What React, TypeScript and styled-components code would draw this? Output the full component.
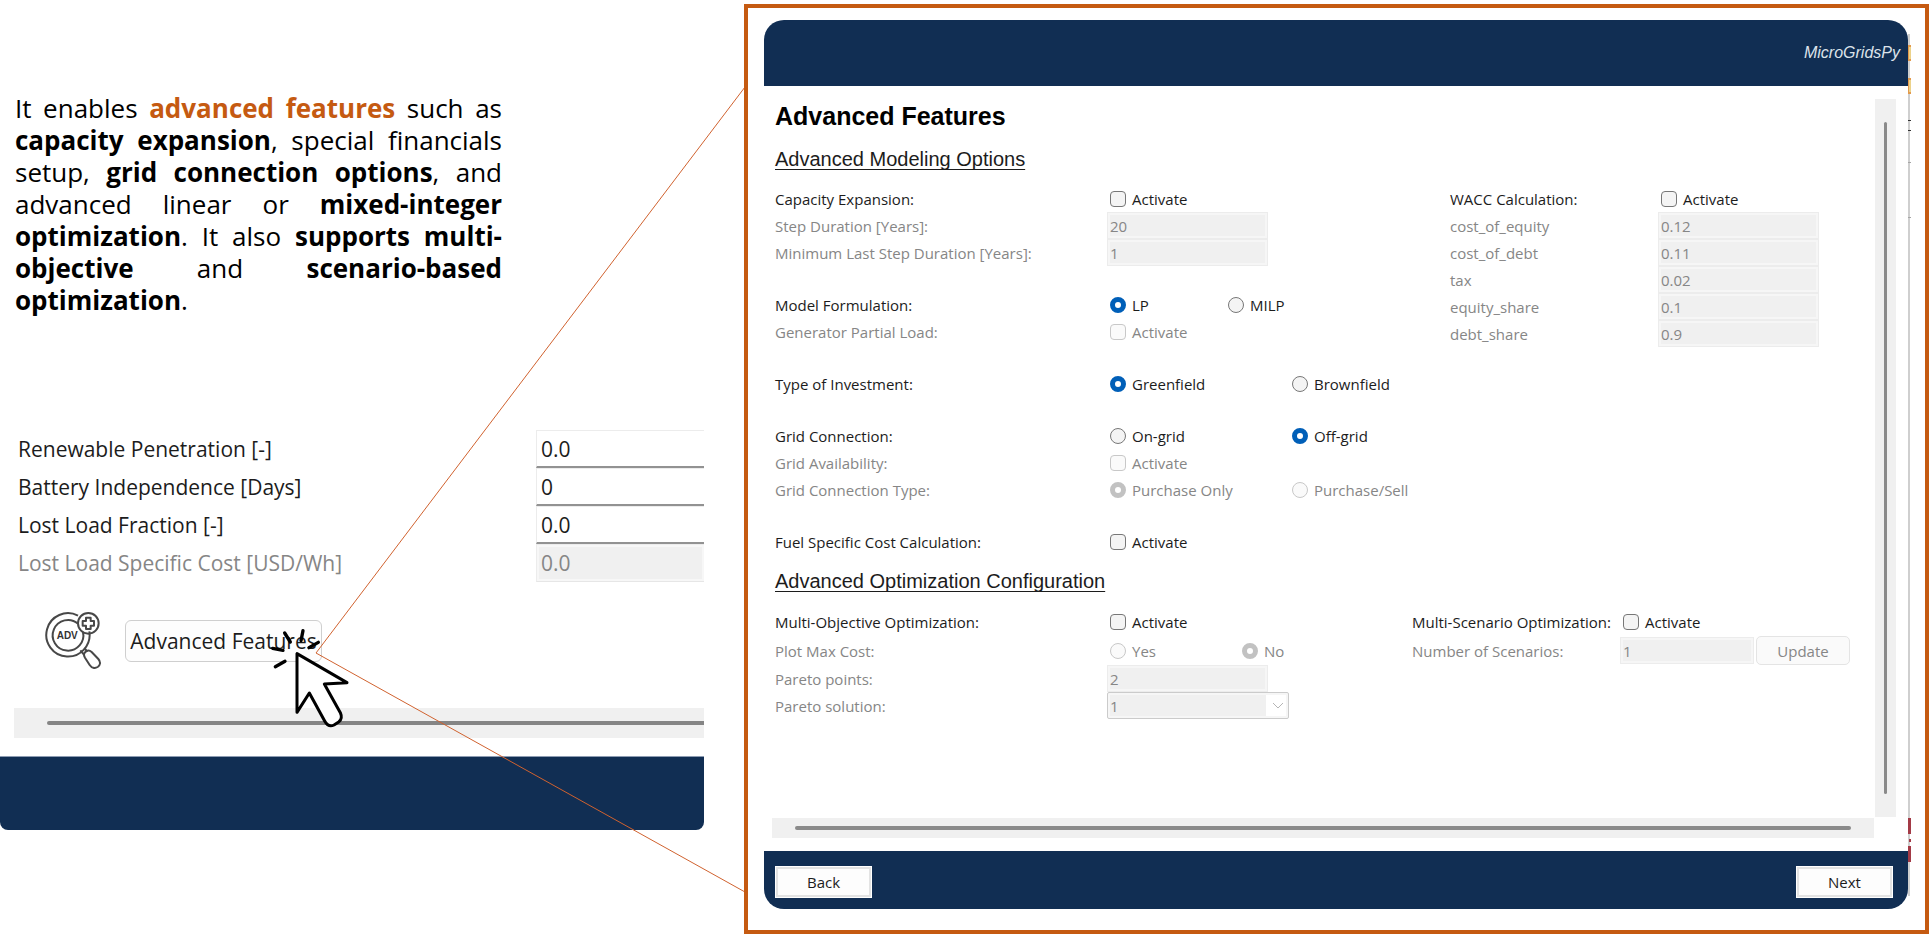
import React, { useId } from 'react';
import styled, { createGlobalStyle, css } from 'styled-components';

const navy = '#112e53';
const accent = '#c55a11';
const ink = '#1c1c1c';
const muted = '#868686';
const uiFont = '"Open Sans", "Noto Sans", sans-serif';
const headFont = '"Liberation Sans", Arial, sans-serif';

const GlobalStyle = createGlobalStyle`
  *, *::before, *::after { box-sizing: border-box; }
  body { margin: 0; background: #fff; color: ${ink}; font-family: ${uiFont}; font-size: 15px; }
  h1, h2, p { margin: 0; }
  input, select, button { font: inherit; color: inherit; }
`;

const Page = styled.div`
  display: grid;
  grid-template-columns: minmax(0, 744fr) minmax(0, 1188fr);
  min-height: 100vh;
`;

/* ---------- Explanation side ---------- */

const Explainer = styled.section`
  position: relative;
  padding: 92px 40px 0 0;
`;

const Intro = styled.p`
  width: 487px;
  margin-left: 15px;
  color: #000;
  font-size: 26px;
  line-height: 32px;
  text-align: justify;
`;

const Highlight = styled.strong`
  color: ${accent};
`;

const Callout = styled.svg`
  position: absolute;
  inset: 0;
  width: 100%;
  height: 100%;
  pointer-events: none;
  fill: none;
  stroke: #d0622f;

  path { vector-effect: non-scaling-stroke; }
`;

const LargeForm = styled.form`
  margin-top: 114px;
  padding-left: 18px;
  font-size: 21px;
`;

const LargeRow = styled.div<{ $disabled?: boolean }>`
  display: grid;
  grid-template-columns: 518px minmax(0, 1fr);
  align-items: center;
  height: 38px;
  color: ${(p) => (p.$disabled ? muted : ink)};
`;

const LargeInput = styled.input`
  width: 100%;
  height: 38px;
  padding: 0 4px;
  border: 1px solid #ececec;
  border-right: 0;
  border-bottom: 2px solid #929292;
  border-radius: 0;
  background: #fff;

  &:disabled {
    border-bottom: 1px solid #e6e6e6;
    background: #f0f0f0;
    box-shadow: inset 0 0 0 2px #f7f7f7;
    color: ${muted};
  }
`;

const LaunchRow = styled.div`
  display: flex;
  align-items: center;
  gap: 23px;
  margin-top: 30px;
  padding-left: 45px;
`;

const AdvIcon = styled.svg`
  width: 57px;
  height: 57px;
  fill: none;
  stroke: #484848;
  stroke-width: 6;

  text {
    fill: #333;
    stroke: none;
    font: bold 30px ${headFont};
  }
`;

const LaunchSlot = styled.div`
  position: relative;
`;

const LaunchButton = styled.button`
  width: 197px;
  height: 42px;
  padding: 0;
  border: 1px solid #cfcfcf;
  border-radius: 6px;
  background: #fdfdfd;
  font-size: 21px;
  line-height: 40px;
  white-space: nowrap;
`;

const ClickCursor = styled.svg`
  position: absolute;
  left: 145px;
  top: 8px;
  width: 80px;
  height: 102px;
  pointer-events: none;
  fill: none;
  stroke: #000;
  stroke-linecap: round;
  stroke-linejoin: round;
`;

const LargeTrack = styled.div`
  display: flex;
  align-items: center;
  height: 30px;
  margin: 39px 0 18px 14px;
  padding-left: 33px;
  background: #f0f0f0;
`;

const LargeThumb = styled.div`
  flex: 1;
  height: 4px;
  border-radius: 2px 0 0 2px;
  background: #858585;
`;

const LargeFooter = styled.div`
  height: 74px;
  border-top: 1px solid #8d9cb2;
  border-radius: 0 0 8px 8px;
  background: ${navy};
`;

/* ---------- Application window ---------- */

const FrameArea = styled.section`
  display: flex;
  padding: 4px 3px 3px 0;
`;

const Frame = styled.div`
  display: flex;
  flex: 1;
  min-width: 0;
  padding: 12px 14px 21px 16px;
  border: 4px solid ${accent};
`;

const AppWindow = styled.div`
  display: flex;
  flex: 1;
  flex-direction: column;
  min-width: 0;
  overflow: hidden;
  border-radius: 20px;
  background: #fff;
`;

const EdgeStrip = styled.svg`
  flex: none;
  width: 3px;
  height: 100%;
`;

const WindowHeader = styled.header`
  display: flex;
  align-items: center;
  justify-content: flex-end;
  height: 66px;
  padding-right: 8px;
  background: ${navy};
  color: #dde3ea;
  font: italic 16px ${headFont};
`;

const WindowFooter = styled.footer`
  display: flex;
  align-items: flex-start;
  justify-content: space-between;
  height: 58px;
  padding: 15px 15px 0 11px;
  background: ${navy};
`;

const NavButton = styled.button`
  width: 97px;
  height: 32px;
  padding: 0;
  border: 1px solid #fff;
  background: #fdfdfd;
  box-shadow: inset 0 0 0 2px #e3e3e3;
`;

const ScrollArea = styled.div`
  display: grid;
  flex: 1;
  grid-template-columns: minmax(0, 1fr) 21px;
  grid-template-rows: 1fr 20px;
  gap: 1px;
  padding: 13px 12px 13px 8px;
`;

const Track = styled.div<{ $vertical?: boolean }>`
  display: flex;
  align-items: stretch;
  background: #f0f0f0;
  padding: ${(p) => (p.$vertical ? '23px 9px' : '8px 23px')};
`;

const Thumb = styled.div`
  flex: 1;
  border-radius: 2px;
  background: #8a8a8a;
`;

const Content = styled.main`
  padding: 3px 0 0 3px;
`;

const Title = styled.h1`
  padding-bottom: 3px;
  color: #000;
  font: bold 25px/28px ${headFont};
`;

const Subtitle = styled.h2`
  margin: 14px 0;
  font: 20px/24px ${headFont};
  text-decoration: underline 1px;
  text-decoration-skip-ink: none;
  text-underline-offset: 3px;
`;

const Panes = styled.div<{ $left: number; $right: number }>`
  display: grid;
  grid-template-columns: minmax(0, ${(p) => p.$left}fr) minmax(0, ${(p) => p.$right}fr);
  align-items: start;
`;

const Stack = styled.div`
  display: grid;
  gap: 25px;
`;

const Row = styled.div<{ $disabled?: boolean; $side?: boolean; $tall?: boolean }>`
  display: grid;
  grid-template-columns: ${(p) => (p.$side ? '208px' : '332px')} minmax(0, 1fr);
  align-items: center;
  height: ${(p) => (p.$tall ? '29px' : '27px')};
  color: ${(p) => (p.$disabled ? muted : ink)};
  white-space: nowrap;
`;

const Choices = styled.div`
  display: flex;
  padding-left: 3px;
`;

const Choice = styled.label<{ $width?: number }>`
  display: flex;
  flex: none;
  align-items: center;
  gap: 6px;
  width: ${(p) => (p.$width ? `${p.$width}px` : 'auto')};
`;

const mark = css`
  flex: none;
  appearance: none;
  width: 16px;
  height: 16px;
  margin: 0;
  border: 1px solid #777;
  background: #f4f4f4;

  &:disabled { border-color: #c8c8c8; background: #fafafa; }
`;

const Check = styled.input.attrs({ type: 'checkbox' })`
  ${mark}
  border-radius: 4px;
`;

const Radio = styled.input.attrs({ type: 'radio' })`
  ${mark}
  border-radius: 50%;

  &:checked { border: 5px solid #005fb8; background: #fff; }
  &:checked:disabled { border-color: #c2c2c2; }
`;

const field = css`
  height: 27px;
  border: 1px solid #ececec;
  border-radius: 0;
  background: #f0f0f0;
  box-shadow: inset 0 0 0 2px #f6f6f6;
  color: ${muted};
  opacity: 1;
`;

const Field = styled.input<{ $short?: boolean }>`
  ${field}
  width: ${(p) => (p.$short ? '134px' : '161px')};
  padding: 0 2px;
`;

const SelectBox = styled.div`
  position: relative;
  width: 182px;
  height: 27px;

  svg {
    position: absolute;
    right: 5px;
    top: 10px;
    width: 12px;
    height: 8px;
    fill: none;
    stroke: #b5b5b5;
  }
`;

const Select = styled.select`
  ${field}
  appearance: none;
  width: 100%;
  padding: 0 24px 0 2px;
  border-color: #cbcbcb;
  border-radius: 2px;
  background: linear-gradient(to left, #fff 22px, #f0f0f0 22px);
`;

const FieldGroup = styled.div`
  display: flex;
  align-items: center;
  gap: 2px;
`;

const UpdateButton = styled.button`
  width: 94px;
  height: 29px;
  padding: 0;
  border: 1px solid #e4e4e4;
  border-radius: 5px;
  background: #fafafa;
  color: ${muted};
`;

/* ---------- Row helpers ---------- */

type RowProps = { label: string; disabled?: boolean; side?: boolean; tall?: boolean };

function FieldRow({ label, value, side, children }: RowProps & { value: string; children?: React.ReactNode }) {
  const id = useId();
  return (
    <Row $disabled $side={side} $tall={!!children}>
      <label htmlFor={id}>{label}</label>
      <FieldGroup>
        <Field id={id} defaultValue={value} disabled $short={!!children} />
        {children}
      </FieldGroup>
    </Row>
  );
}

function CheckRow({ label, disabled, side, tall }: RowProps) {
  const id = useId();
  return (
    <Row $disabled={disabled} $side={side} $tall={tall}>
      <span id={id}>{label}</span>
      <Choices>
        <Choice>
          <Check disabled={disabled} aria-describedby={id} />
          Activate
        </Choice>
      </Choices>
    </Row>
  );
}

function RadioRow({ label, disabled, tall, options, selected, spacing }: RowProps & {
  options: string[];
  selected: string;
  spacing: number;
}) {
  const id = useId();
  return (
    <Row $disabled={disabled} $tall={tall} role="radiogroup" aria-labelledby={id}>
      <span id={id}>{label}</span>
      <Choices>
        {options.map((option) => (
          <Choice key={option} $width={spacing}>
            <Radio name={label} disabled={disabled} defaultChecked={option === selected} />
            {option}
          </Choice>
        ))}
      </Choices>
    </Row>
  );
}

const resilienceFields = [
  { id: 'renewable', label: 'Renewable Penetration [-]', value: '0.0' },
  { id: 'battery', label: 'Battery Independence [Days]', value: '0' },
  { id: 'lost-load', label: 'Lost Load Fraction [-]', value: '0.0' },
  { id: 'lost-load-cost', label: 'Lost Load Specific Cost [USD/Wh]', value: '0.0', disabled: true },
];

const waccFields = [
  ['cost_of_equity', '0.12'],
  ['cost_of_debt', '0.11'],
  ['tax', '0.02'],
  ['equity_share', '0.1'],
  ['debt_share', '0.9'],
];

export default function App() {
  return (
    <>
      <GlobalStyle />
      <Page>
        <Explainer>
          <Intro>
            It enables <Highlight>advanced features</Highlight> such as <strong>capacity expansion</strong>,
            special financials setup, <strong>grid connection options</strong>, and advanced linear or{' '}
            <strong>mixed-integer optimization</strong>. It also{' '}
            <strong>supports multi-objective</strong> and <strong>scenario-based optimization</strong>.
          </Intro>

          <LargeForm>
            {resilienceFields.map((f) => (
              <LargeRow key={f.id} $disabled={f.disabled}>
                <label htmlFor={f.id}>{f.label}</label>
                <LargeInput id={f.id} defaultValue={f.value} disabled={f.disabled} />
              </LargeRow>
            ))}
          </LargeForm>

          <LaunchRow>
            <AdvIcon viewBox="134 66 171 171" aria-hidden="true">
              <path d="M233 77A65 65 0 1 0 267 124" />
              <path d="M233 101A46 46 0 1 0 248 126" />
              <circle cx="264" cy="100" r="31" />
              <path d="M257 83h14v10h10v14h-10v10h-14v-10h-10v-14h10z" strokeLinejoin="round" />
              <path d="M240 181l12 14M252 174l9 11" />
              <path d="M252 190c4-9 14-11 22-4l20 21c8 9 6 19-2 24-9 5-18 3-24-6l-14-22c-3-5-4-9-2-13z" />
              <text x="169" y="146">ADV</text>
            </AdvIcon>
            <LaunchSlot>
              <LaunchButton type="button">Advanced Features</LaunchButton>
              <ClickCursor viewBox="812 110 240 306" aria-hidden="true">
                <path
                  d="M893 187V363L930 305L976 389Q987 409 1004 401L1018 392Q1031 382 1023 364L975 278L1043 274Z"
                  fill="#fff"
                  strokeWidth="9"
                />
                <path
                  d="M856 125L873 152M911 118L905 148M957 153L929 169M820 171L851 177M857 210L828 226"
                  strokeWidth="10"
                />
              </ClickCursor>
            </LaunchSlot>
          </LaunchRow>

          <LargeTrack>
            <LargeThumb />
          </LargeTrack>
          <LargeFooter />

          <Callout viewBox="0 0 744 937" preserveAspectRatio="none" aria-hidden="true">
            <path d="M745 87L316 653L745 892" />
          </Callout>
        </Explainer>

        <FrameArea>
          <Frame>
            <AppWindow>
              <WindowHeader>MicroGridsPy</WindowHeader>
              <ScrollArea>
                <Content>
                  <Title>Advanced Features</Title>

                  <Subtitle>Advanced Modeling Options</Subtitle>
                  <Panes $left={675} $right={424}>
                    <Stack>
                      <div>
                        <CheckRow label="Capacity Expansion:" />
                        <FieldRow label="Step Duration [Years]:" value="20" />
                        <FieldRow label="Minimum Last Step Duration [Years]:" value="1" />
                      </div>
                      <div>
                        <RadioRow label="Model Formulation:" options={['LP', 'MILP']} selected="LP" spacing={118} />
                        <CheckRow label="Generator Partial Load:" disabled />
                      </div>
                      <RadioRow
                        label="Type of Investment:"
                        options={['Greenfield', 'Brownfield']}
                        selected="Greenfield"
                        spacing={182}
                      />
                      <div>
                        <RadioRow
                          label="Grid Connection:"
                          options={['On-grid', 'Off-grid']}
                          selected="Off-grid"
                          spacing={182}
                        />
                        <CheckRow label="Grid Availability:" disabled />
                        <RadioRow
                          label="Grid Connection Type:"
                          options={['Purchase Only', 'Purchase/Sell']}
                          selected="Purchase Only"
                          spacing={182}
                          disabled
                        />
                      </div>
                      <CheckRow label="Fuel Specific Cost Calculation:" />
                    </Stack>
                    <div>
                      <CheckRow label="WACC Calculation:" side />
                      {waccFields.map(([label, value]) => (
                        <FieldRow key={label} label={label} value={value} side />
                      ))}
                    </div>
                  </Panes>

                  <Subtitle>Advanced Optimization Configuration</Subtitle>
                  <Panes $left={637} $right={462}>
                    <div>
                      <CheckRow label="Multi-Objective Optimization:" tall />
                      <RadioRow
                        label="Plot Max Cost:"
                        options={['Yes', 'No']}
                        selected="No"
                        spacing={132}
                        disabled
                        tall
                      />
                      <FieldRow label="Pareto points:" value="2" />
                      <Row $disabled>
                        <label htmlFor="pareto-solution">Pareto solution:</label>
                        <SelectBox>
                          <Select id="pareto-solution" disabled defaultValue="1">
                            <option>1</option>
                          </Select>
                          <svg viewBox="0 0 12 8" aria-hidden="true">
                            <path d="M1 1l5 5 5-5" />
                          </svg>
                        </SelectBox>
                      </Row>
                    </div>
                    <div>
                      <CheckRow label="Multi-Scenario Optimization:" side tall />
                      <FieldRow label="Number of Scenarios:" value="1" side>
                        <UpdateButton type="button" disabled>Update</UpdateButton>
                      </FieldRow>
                    </div>
                  </Panes>
                </Content>
                <Track $vertical>
                  <Thumb />
                </Track>
                <Track>
                  <Thumb />
                </Track>
              </ScrollArea>
              <WindowFooter>
                <NavButton type="button">Back</NavButton>
                <NavButton type="button">Next</NavButton>
              </WindowFooter>
            </AppWindow>
            <EdgeStrip viewBox="0 0 3 889" preserveAspectRatio="none" aria-hidden="true">
              <path d="M0 14h2v862h-2z" fill="#cfcfcf" />
              <path d="M0 25h3v16h-3zM0 58h3v16h-3z" fill="#e39a4c" />
              <path d="M1 27h2v12h-2zM1 60h2v12h-2z" fill="#ecd28a" />
              <path d="M0 100h3v1h-3zM0 110h3v1h-3z" fill="#333" />
              <path d="M0 142h3v1h-3zM0 197h3v1h-3z" fill="#a5a5a5" />
              <path d="M0 798h3v16h-3zM1 819h2v3h-2zM0 826h3v16h-3z" fill="#a33a46" />
            </EdgeStrip>
          </Frame>
        </FrameArea>
      </Page>
    </>
  );
}
